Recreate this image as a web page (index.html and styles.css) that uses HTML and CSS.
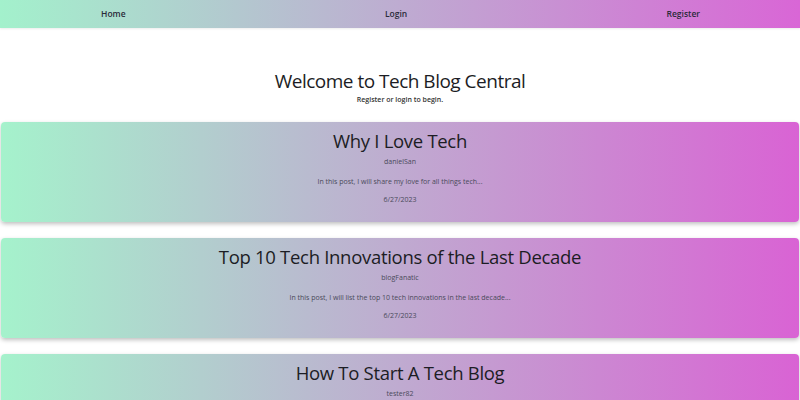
FILE: index.html
```html
<!DOCTYPE html>
<html lang="en">
<head>
<meta charset="utf-8">
<title>Tech Blog Central</title>
<link rel="stylesheet" href="styles.css">
</head>
<body>
<nav class="nav">
  <a href="#" class="nav-link">Home</a>
  <a href="#" class="nav-link">Login</a>
  <a href="#" class="nav-link">Register</a>
</nav>
<header class="hero">
  <h1 class="hero-title">Welcome to Tech Blog Central</h1>
  <p class="hero-sub">Register or login to begin.</p>
</header>
<main class="posts">
  <article class="card">
    <h2 class="card-title">Why I Love Tech</h2>
    <p class="card-author">danielSan</p>
    <p class="card-text">In this post, I will share my love for all things tech...</p>
    <p class="card-date">6/27/2023</p>
  </article>
  <article class="card">
    <h2 class="card-title">Top 10 Tech Innovations of the Last Decade</h2>
    <p class="card-author">blogFanatic</p>
    <p class="card-text">In this post, I will list the top 10 tech innovations in the last decade...</p>
    <p class="card-date">6/27/2023</p>
  </article>
  <article class="card">
    <h2 class="card-title">How To Start A Tech Blog</h2>
    <p class="card-author">tester82</p>
    <p class="card-text">In this post, I will explain how to start a tech blog...</p>
    <p class="card-date">6/27/2023</p>
  </article>
</main>
</body>
</html>
```
FILE: styles.css
```css
* { box-sizing: border-box; }
body {
  margin: 0;
  font-family: "Open Sans", "Noto Sans", sans-serif;
  color: #1c1d24;
  background: #fff;
}
.nav {
  height: 28px;
  display: flex;
  justify-content: space-between;
  align-items: center;
  padding: 0 100px 2px 101px;
  background: linear-gradient(90deg, #a3f1cc, #d966d6);
  box-shadow: 0 1px 2px rgba(0,0,0,0.08);
}
.nav-link {
  font-size: 8.5px;
  font-weight: 600;
  color: #2b2b3a;
  text-decoration: none;
}
.hero {
  text-align: center;
  padding-top: 40px;
  height: 94px;
}
.hero-title {
  margin: 0;
  font-size: 19px;
  font-weight: 500;
  line-height: 26px;
  letter-spacing: -0.5px;
}
.hero-sub {
  margin: 0;
  font-size: 7px;
  font-weight: 600;
  line-height: 12px;
  color: #333;
}
.posts {
  display: flex;
  flex-direction: column;
  gap: 16px;
  padding: 0 1px;
}
.card {
  height: 100px;
  flex-shrink: 0;
  border-radius: 4px;
  background: linear-gradient(90deg, #a5f2cc, #d963d4);
  box-shadow: 0 2px 4px rgba(0,0,0,0.25);
  text-align: center;
  padding-top: 6px;
}
.card-title {
  margin: 0;
  font-size: 18.5px;
  font-weight: 500;
  line-height: 26px;
  letter-spacing: -0.3px;
}
.card-author,
.card-text,
.card-date {
  margin: 0;
  font-size: 7px;
  color: #4a4a5a;
  line-height: 10px;
}
.card-author { margin-top: 3px; }
.card-text { margin-top: 10px; }
.card-date { margin-top: 8px; }
```
